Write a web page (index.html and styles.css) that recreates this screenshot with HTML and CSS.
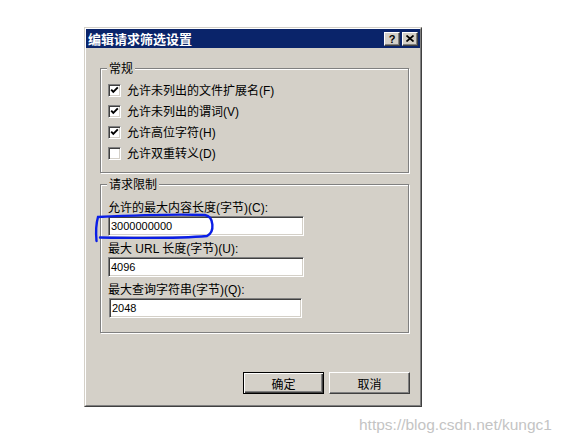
FILE: index.html
```html
<!DOCTYPE html>
<html lang="zh-CN">
<head>
<meta charset="utf-8">
<title>编辑请求筛选设置</title>
<link rel="stylesheet" href="styles.css">
</head>
<body>
<div class="dialog">
  <div class="dialog-frame">
    <div class="titlebar">
      <span class="title">编辑请求筛选设置</span>
      <div class="caption-btns">
        <div class="cap-btn"><span class="help-glyph">?</span></div>
        <div class="cap-btn">
          <svg width="8" height="7" viewBox="0 0 8 7"><path d="M0.5 0.5 L7.5 6.5 M7.5 0.5 L0.5 6.5" stroke="#000" stroke-width="1.7" fill="none"/></svg>
        </div>
      </div>
    </div>
    <div class="content">
      <div class="group">
        <div class="group-title">常规</div>
        <div class="checks">
          <div class="check-row">
            <span class="checkbox"><svg width="9" height="9" viewBox="0 0 9 9"><path d="M1.2 3.6 L3.3 5.8 L7.8 1.3" stroke="#000" stroke-width="1.9" fill="none"/></svg></span>
            <span class="check-label">允许未列出的文件扩展名(F)</span>
          </div>
          <div class="check-row">
            <span class="checkbox"><svg width="9" height="9" viewBox="0 0 9 9"><path d="M1.2 3.6 L3.3 5.8 L7.8 1.3" stroke="#000" stroke-width="1.9" fill="none"/></svg></span>
            <span class="check-label">允许未列出的谓词(V)</span>
          </div>
          <div class="check-row">
            <span class="checkbox"><svg width="9" height="9" viewBox="0 0 9 9"><path d="M1.2 3.6 L3.3 5.8 L7.8 1.3" stroke="#000" stroke-width="1.9" fill="none"/></svg></span>
            <span class="check-label">允许高位字符(H)</span>
          </div>
          <div class="check-row">
            <span class="checkbox"></span>
            <span class="check-label">允许双重转义(D)</span>
          </div>
        </div>
      </div>
      <div class="group group-limits">
        <div class="group-title">请求限制</div>
        <div class="fields">
          <div class="field">
            <div class="field-label">允许的最大内容长度(字节)(C):</div>
            <div class="textbox">3000000000</div>
          </div>
          <div class="field">
            <div class="field-label">最大 URL 长度(字节)(U):</div>
            <div class="textbox">4096</div>
          </div>
          <div class="field">
            <div class="field-label">最大查询字符串(字节)(Q):</div>
            <div class="textbox textbox-short">2048</div>
          </div>
        </div>
      </div>
      <div class="buttons">
        <div class="btn btn-default">确定</div>
        <div class="btn">取消</div>
      </div>
    </div>
  </div>
</div>
<div class="watermark">https://blog.csdn.net/kungc1</div>
<svg class="annotation" width="561" height="442" viewBox="0 0 561 442">
  <path d="M96.5 241 C95.8 233 96 224 98 217 C130 215.5 180 214 205 215 C214 216.5 215 232 207 236 C180 238.5 130 238 100 237.5" stroke="#0a1ee6" stroke-width="2.4" fill="none" stroke-linecap="round"/>
</svg>
</body>
</html>
```

FILE: styles.css
```css
* {
  box-sizing: border-box;
}

body {
  margin: 0;
  width: 561px;
  height: 442px;
  overflow: hidden;
  position: relative;
  background: #fff;
  color: #000;
  font-family: "Liberation Sans", "Noto Sans CJK SC", sans-serif;
  font-size: 12px;
}

.dialog {
  margin: 27px 0 0 84px;
  width: 338px;
  height: 380px;
  background: #d4d0c8;
  border: 1px solid;
  border-color: #d4d0c8 #404040 #404040 #d4d0c8;
}

.dialog-frame {
  height: 100%;
  border: 1px solid;
  border-color: #fff #808080 #808080 #fff;
  display: flex;
  flex-direction: column;
}

.titlebar {
  height: 19px;
  background: #0a246a;
  display: flex;
  align-items: center;
  justify-content: space-between;
  padding: 0 2px 0 2px;
}

.title {
  color: #fff;
  font-family: "Noto Sans CJK SC", sans-serif;
  font-weight: bold;
  font-size: 13px;
  line-height: 19px;
}

.caption-btns {
  display: flex;
  gap: 2px;
}

.cap-btn {
  width: 16px;
  height: 14px;
  background: #d4d0c8;
  border: 1px solid;
  border-color: #fff #404040 #404040 #fff;
  box-shadow: inset -1px -1px #808080;
  display: flex;
  align-items: center;
  justify-content: center;
}

.help-glyph {
  font-family: "Liberation Sans", sans-serif;
  font-weight: bold;
  font-size: 11px;
  line-height: 12px;
}

.content {
  flex: 1;
  padding: 20px 11px 0 14px;
  display: flex;
  flex-direction: column;
}

.group {
  border: 1px solid #808080;
  box-shadow: inset 1px 1px #fff, 1px 1px #fff;
  padding: 0 7px 8px 7px;
}

.group-title {
  width: fit-content;
  height: 14px;
  margin: -8px 0 0 -1px;
  padding: 0 2px;
  background: #d4d0c8;
  font-family: "Noto Sans CJK SC", sans-serif;
  line-height: 14px;
}

.checks {
  margin-top: 5px;
  display: flex;
  flex-direction: column;
}

.check-row {
  height: 21px;
  display: flex;
  align-items: center;
  gap: 6px;
}

.checkbox {
  width: 13px;
  height: 13px;
  flex: none;
  background: #fff;
  border: 1px solid;
  border-color: #808080 #fff #fff #808080;
  box-shadow: inset 1px 1px #404040, inset -1px -1px #d4d0c8;
  display: flex;
  align-items: center;
  justify-content: center;
}

.check-label {
  line-height: 14px;
}

.group-limits {
  margin-top: 11px;
  padding-bottom: 14px;
}

.fields {
  margin-top: 9px;
  display: flex;
  flex-direction: column;
  gap: 5px;
}

.field-label {
  line-height: 16px;
}

.textbox {
  width: 196px;
  height: 20px;
  background: #fff;
  border: 1px solid;
  border-color: #808080 #fff #fff #808080;
  box-shadow: inset 1px 1px #404040, inset -1px -1px #d4d0c8;
  padding: 0 2px 0 2px;
  font-family: "Liberation Sans", sans-serif;
  font-size: 11px;
  line-height: 18px;
}

.textbox-short {
  width: 193px;
  margin-left: 1px;
}

.buttons {
  margin: 39px -1px 0 0;
  display: flex;
  justify-content: flex-end;
  gap: 5px;
}

.btn {
  width: 81px;
  height: 22px;
  background: #d4d0c8;
  border: 1px solid;
  border-color: #fff #404040 #404040 #fff;
  box-shadow: inset -1px -1px #808080;
  display: flex;
  align-items: center;
  justify-content: center;
  font-family: "Noto Sans CJK SC", sans-serif;
  font-size: 12px;
}

.btn-default {
  border-color: #000;
  box-shadow: inset 1px 1px #fff, inset -1px -1px #404040, inset -2px -2px #808080;
}

.watermark {
  margin-top: 9px;
  padding-right: 9px;
  text-align: right;
  font-family: "Liberation Sans", sans-serif;
  font-size: 15.5px;
  line-height: 18px;
  color: #c4c4c4;
}

.annotation {
  position: absolute;
  left: 0;
  top: 0;
  pointer-events: none;
}
```
